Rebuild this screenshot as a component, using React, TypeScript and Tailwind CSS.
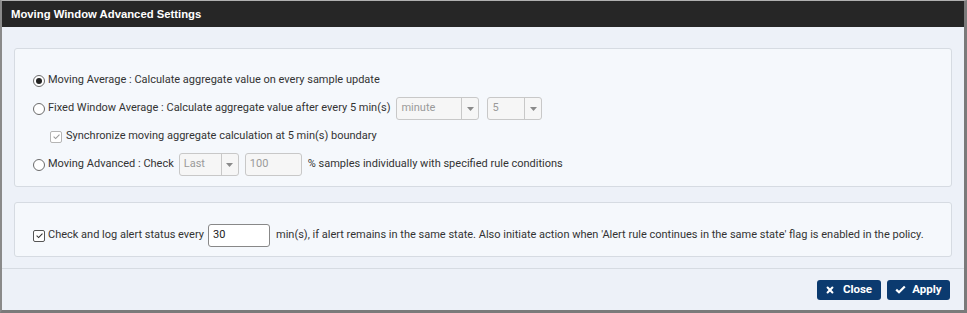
import React from "react";

function Radio({ checked }: { checked?: boolean }) {
  return (
    <span className="inline-flex h-[12px] w-[12px] shrink-0 items-center justify-center rounded-full border border-[#6b6b6b] bg-white">
      {checked && <span className="h-[6px] w-[6px] rounded-full bg-[#222]" />}
    </span>
  );
}

function Check({ disabled }: { disabled?: boolean }) {
  return (
    <span
      className={
        "inline-flex h-[12px] w-[12px] shrink-0 items-center justify-center rounded-[2px] border bg-white " +
        (disabled ? "border-[#b5b5b5]" : "border-[#555]")
      }
    >
      <svg width="9" height="9" viewBox="0 0 10 10">
        <path d="M1.8 5.2 L4 7.3 L8.3 2.8" fill="none" stroke={disabled ? "#9a9a9a" : "#333"} strokeWidth="1.2" />
      </svg>
    </span>
  );
}

function Select({ value, w }: { value: string; w: string }) {
  return (
    <span className={"inline-flex h-[23px] shrink-0 items-center rounded-[3px] border border-[#c8c8c8] bg-[#f6f6f6] " + w}>
      <span className="flex-1 pl-[4px] text-[#9a9a9a]">{value}</span>
      <span className="flex h-full w-[17px] items-center justify-center border-l border-[#c8c8c8]">
        <svg width="7" height="4" viewBox="0 0 7 4">
          <path d="M0 0 L7 0 L3.5 4 Z" fill="#8a8a8a" />
        </svg>
      </span>
    </span>
  );
}

export default function App() {
  return (
    <div
      className="flex h-[313px] w-[967px] flex-col border-l-2 border-r-[3px] border-b-[3px] border-t border-l-[#8a8a8a] border-r-[#7a7a7a] border-b-[#7a7a7a] border-t-[#b0b0b0] bg-[#edf1f8] text-[11px] text-[#333]"
      style={{ fontFamily: "Roboto, 'Liberation Sans', sans-serif" }}
    >
      <div
        className="flex h-[26px] shrink-0 items-center bg-[#262626] pl-[9px] text-[11.3px] font-bold text-white"
        style={{ fontFamily: "'Liberation Sans', Arial, sans-serif" }}
      >
        Moving Window Advanced Settings
      </div>
      <div className="flex flex-1 flex-col px-[12px] pt-[21px]">
        <div className="flex h-[139px] flex-col gap-[5px] rounded-[3px] border border-[#d6dbe2] bg-[#f5f8fc] pl-[18px] pt-[20px]">
          <div className="flex h-[23px] items-center">
            <Radio checked />
            <span className="ml-[3px]">Moving Average : Calculate aggregate value on every sample update</span>
          </div>
          <div className="flex h-[23px] items-center">
            <Radio />
            <span className="ml-[3px] mr-[6px]">Fixed Window Average : Calculate aggregate value after every 5 min(s)</span>
            <Select value="minute" w="w-[83px]" />
            <span className="ml-[8px]">
              <Select value="5" w="w-[55px]" />
            </span>
          </div>
          <div className="flex h-[23px] items-center pl-[17px]">
            <Check disabled />
            <span className="ml-[4px]">Synchronize moving aggregate calculation at 5 min(s) boundary</span>
          </div>
          <div className="flex h-[23px] items-center">
            <Radio />
            <span className="ml-[3px] mr-[5px]">Moving Advanced : Check</span>
            <Select value="Last" w="w-[60px]" />
            <span className="ml-[6px] inline-flex h-[23px] w-[57px] items-center rounded-[3px] border border-[#c8c8c8] bg-[#f6f6f6] pl-[4px] text-[#9a9a9a]">
              100
            </span>
            <span className="ml-[6px]">% samples individually with specified rule conditions</span>
          </div>
        </div>
        <div className="mt-[15px] flex h-[55px] items-start rounded-[3px] border border-[#d6dbe2] bg-[#f5f8fc] pl-[18px] pt-[21px]">
          <div className="flex h-[23px] items-center">
            <Check />
            <span className="ml-[3px] mr-[4px]">Check and log alert status every</span>
            <span className="inline-flex h-[23px] w-[62px] items-center rounded-[3px] border border-[#888] bg-white pl-[4px] text-[#222]">
              30
            </span>
            <span className="ml-[6px]">
              min(s), if alert remains in the same state. Also initiate action when 'Alert rule continues in the same state' flag is enabled in the policy.
            </span>
          </div>
        </div>
      </div>
      <div className="flex h-[42px] shrink-0 items-center justify-end gap-[6px] border-t border-[#d6dbe2] pr-[14px]">
        <button className="flex h-[20px] w-[64px] items-center justify-center gap-[9px] rounded-[3px] bg-[#0b3a6f] text-[11.5px] font-bold text-white">
          <svg width="8" height="8" viewBox="0 0 10 10">
            <path d="M2 2 L8 8 M8 2 L2 8" stroke="white" strokeWidth="2.6" strokeLinecap="round" />
          </svg>
          Close
        </button>
        <button className="flex h-[20px] w-[63px] items-center justify-center gap-[6px] rounded-[3px] bg-[#0b3a6f] text-[11.5px] font-bold text-white">
          <svg width="11" height="9" viewBox="0 0 11 9">
            <path d="M1.2 4.6 L4 7.3 L9.8 1.4" fill="none" stroke="white" strokeWidth="2.2" />
          </svg>
          Apply
        </button>
      </div>
    </div>
  );
}
